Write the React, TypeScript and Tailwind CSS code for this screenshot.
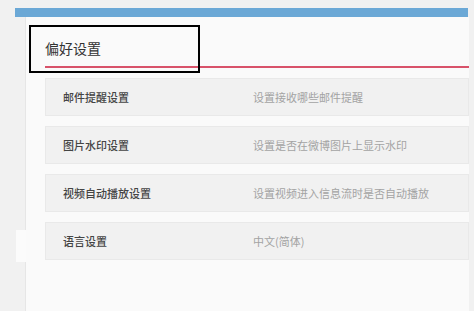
export default function App() {
  const rows = [
    { label: "邮件提醒设置", value: "设置接收哪些邮件提醒" },
    { label: "图片水印设置", value: "设置是否在微博图片上显示水印" },
    { label: "视频自动播放设置", value: "设置视频进入信息流时是否自动播放" },
    { label: "语言设置", value: "中文(简体)" },
  ];

  return (
    <div
      className="relative h-[311px] w-[474px] overflow-hidden bg-[#f1f1f1] pt-[8px]"
      style={{ fontFamily: '"Noto Sans CJK SC", "Noto Sans", sans-serif' }}
    >
      {/* top blue bar */}
      <div className="ml-[15px] h-[9px] w-[453px] bg-[#6ba8d6]" />

      <div className="flex h-[294px]">
        {/* left sidebar stub */}
        <div className="w-[26px] border-r border-[#e6e6e6]">
          <div className="mt-[213px] ml-[16px] h-[32px] w-[10px] bg-[#fbfbfb]" />
        </div>

        {/* settings card */}
        <div className="w-[443px] bg-[#fafafa] pl-[19px]">
          <h2 className="pt-[21px] text-[14px] leading-[20px] text-[#333]">偏好设置</h2>
          <div className="mt-[8px] h-[2px] bg-[#d8526a]" />

          <div className="mt-[10px] flex flex-col gap-[10px]">
            {rows.map((r) => (
              <div
                key={r.label}
                className="flex h-[38px] items-center border border-[#e9e9e9] bg-[#f1f1f1] text-[11px]"
              >
                <span className="w-[207px] pl-[17px] font-medium text-[#444]">{r.label}</span>
                <span className="text-[#a3a3a3]">{r.value}</span>
              </div>
            ))}
          </div>
        </div>
      </div>

      {/* annotation box */}
      <div className="absolute top-[25px] left-[29px] h-[48px] w-[171px] border-2 border-black" />
    </div>
  );
}
